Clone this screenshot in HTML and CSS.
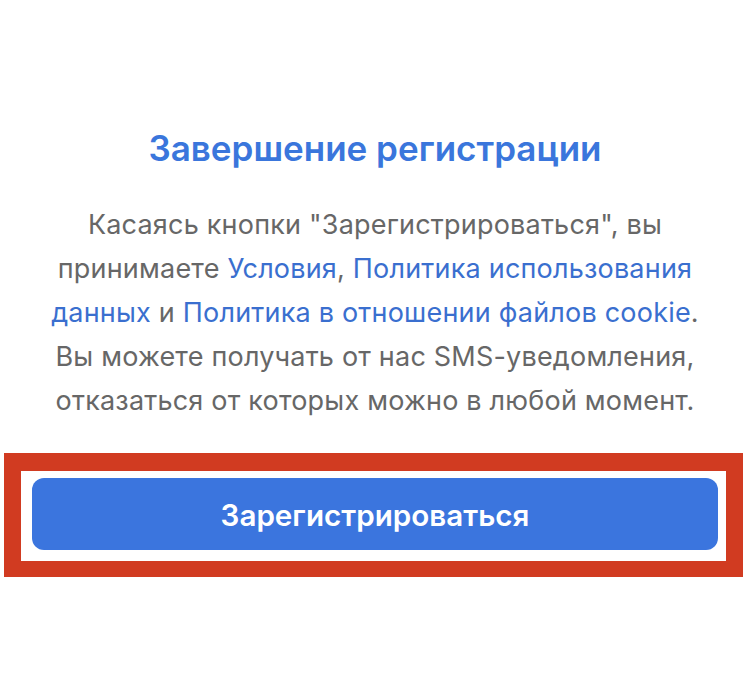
FILE: index.html
```html
<!DOCTYPE html>
<html lang="ru">
<head>
<meta charset="utf-8">
<link rel="stylesheet" href="styles.css">
</head>
<body>
<main class="page">
  <h1 class="title">Завершение регистрации</h1>
  <p class="terms">Касаясь кнопки "Зарегистрироваться", вы<br>принимаете <a class="link">Условия</a>, <a class="link">Политика использования</a><br><a class="link">данных</a> и <a class="link">Политика в отношении файлов cookie</a>.<br>Вы можете получать от нас SMS-уведомления,<br>отказаться от которых можно в любой момент.</p>
  <div class="frame">
    <button class="btn">Зарегистрироваться</button>
  </div>
</main>
</body>
</html>
```

FILE: styles.css
```css
html, body {
  margin: 0;
  padding: 0;
  background: #fdfdfd;
}
.page {
  width: 750px;
  height: 698px;
  background: #ffffff;
  font-family: Inter, Roboto, "Noto Sans", sans-serif;
  display: flex;
  flex-direction: column;
  align-items: center;
  padding-top: 126px;
  box-sizing: border-box;
}
.title {
  margin: 0;
  font-size: 35px;
  font-weight: 600;
  line-height: 44px;
  color: #3a76dc;
  text-align: center;
}
.terms {
  margin: 33px 0 0;
  font-size: 27px;
  letter-spacing: 0.2px;
  line-height: 44px;
  color: #676767;
  text-align: center;
}
.link {
  color: #3a6fcf;
}
.frame {
  align-self: flex-start;
  margin: 30px 0 0 4px;
  width: 739px;
  box-sizing: border-box;
  border-style: solid;
  border-color: #d13b21;
  border-width: 18px 17px 16px 17px;
  background: #ffffff;
  padding: 7px 8px 11px 11px;
}
.btn {
  display: block;
  width: 100%;
  height: 72px;
  border: 0;
  border-radius: 12px;
  background: #3b75de;
  color: #ffffff;
  font-family: Inter, Roboto, "Noto Sans", sans-serif;
  font-size: 29.6px;
  font-weight: 600;
  padding: 2px 0 0;
}
```
